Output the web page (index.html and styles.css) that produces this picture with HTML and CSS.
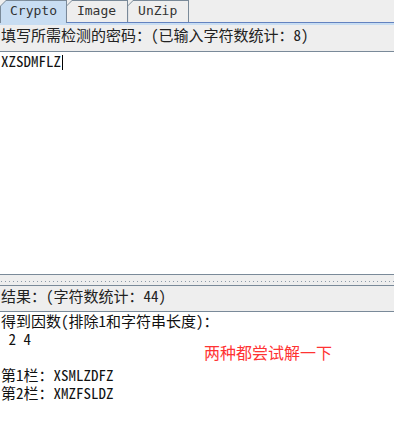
FILE: index.html
```html
<!DOCTYPE html>
<html lang="zh-CN">
<head>
<meta charset="UTF-8">
<meta name="viewport" content="width=device-width, initial-scale=1.0">
<title>Crypto</title>
<link rel="stylesheet" href="styles.css">
</head>
<body>

<div class="window">
    <div class="tabstrip">
        <div class="tab selected"><div class="tab-face">Crypto</div></div>
        <div class="tab"><div class="tab-face">Image</div></div>
        <div class="tab"><div class="tab-face">UnZip</div></div>
    </div>
    <div class="tab-band"></div>

    <div class="field-label">填写所需检测的密码：(已输入字符数统计：8)</div>
    <div class="text-box input-box">
        <div class="line">XZSDMFLZ<span class="caret"></span></div>
    </div>

    <div class="divider"></div>

    <div class="field-label result-label">结果：(字符数统计：44)</div>
    <div class="text-box result-box">
        <div class="line">得到因数(排除1和字符串长度)：</div>
        <div class="line"> 2 4</div>
        <div class="line"> </div>
        <div class="line">第1栏：XSMLZDFZ</div>
        <div class="line">第2栏：XMZFSLDZ</div>
        <span class="note">两种都尝试解一下</span>
    </div>
</div>

</body>
</html>
```

FILE: styles.css
```css
body {
    margin: 0;
    padding: 0;
    background-color: #eeeeee;
    font-family: "Noto Sans Mono CJK SC", "DejaVu Sans Mono", "Noto Sans CJK SC", monospace;
    font-size: 15px;
    color: #222;
}

.window {
    width: 394px;
    height: 429px;
    display: flex;
    flex-direction: column;
    overflow: hidden;
}

/* tabs, metal look */
.tabstrip {
    height: 21px;
    padding-top: 1px;
    display: flex;
    align-items: flex-end;
}

.tab {
    height: 21px;
    padding: 1px 1px 0 1px;
    margin-right: -1px;
    background-color: #7a8a99;
    clip-path: polygon(6px 0, 100% 0, 100% 100%, 0 100%, 0 6px);
}

.tab-face {
    height: 21px;
    padding: 0 11px 0 10px;
    line-height: 20px;
    font-family: "DejaVu Sans Mono", monospace;
    font-size: 13px;
    color: #333;
    background-color: #eeeeee;
    clip-path: polygon(5px 0, 100% 0, 100% 100%, 0 100%, 0 5px);
}

.tab.selected {
    height: 22px;
    margin-bottom: -1px;
    position: relative;
    z-index: 1;
}

.tab.selected .tab-face {
    height: 22px;
    padding: 0 9px 0 9px;
    background-color: #c8ddf2;
}

.tab-band {
    height: 2px;
    border-top: 1px solid #6382bf;
    background-color: #c8ddf2;
}

.field-label {
    height: 26px;
    line-height: 20px;
    padding-left: 1px;
    white-space: pre;
}

.result-label {
    height: 25px;
    line-height: 19px;
    border-top: 1px solid #7a8a99;
}

.text-box {
    background-color: #fff;
    border-top: 1px solid #7a8a99;
    padding: 0 1px;
    color: #111;
}

.line {
    height: 18px;
    line-height: 18px;
    white-space: pre;
}

.input-box {
    height: 222px;
    border-bottom: 1px solid #7a8a99;
}

.caret {
    display: inline-block;
    width: 1px;
    height: 15px;
    margin-left: 1px;
    vertical-align: -3px;
    background-color: #000;
}

.divider {
    height: 10px;
    background-image: linear-gradient(to right, #8c9aa8 1px, transparent 1px);
    background-size: 4px 1px;
    background-position: 1px 6px;
    background-repeat: repeat-x;
}

.result-box {
    flex: 1;
    position: relative;
}

.note {
    position: absolute;
    left: 204px;
    top: 32px;
    font-family: "Noto Sans CJK SC", sans-serif;
    font-size: 16px;
    line-height: 16px;
    color: #ff3333;
}
```
